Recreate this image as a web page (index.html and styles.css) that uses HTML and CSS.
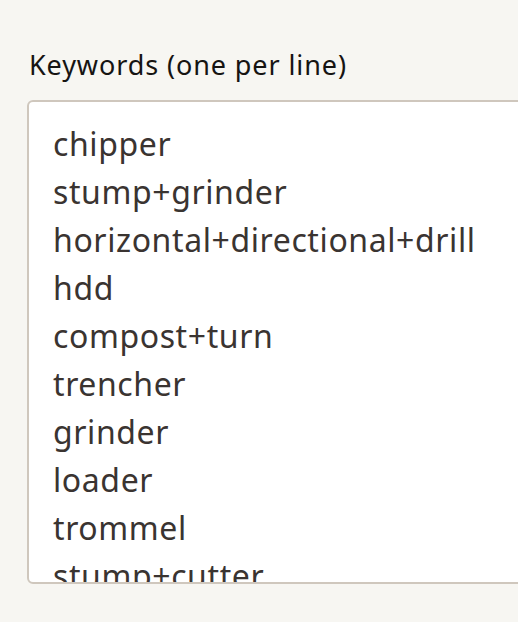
FILE: index.html
```html
<!DOCTYPE html>
<html>
<head>
<meta charset="utf-8">
<link rel="stylesheet" href="styles.css">
</head>
<body>
<div class="field">
<label class="label" for="kw">Keywords (one per line)</label>
<textarea id="kw" class="keywords" spellcheck="false">chipper
stump+grinder
horizontal+directional+drill
hdd
compost+turn
trencher
grinder
loader
trommel
stump+cutter
mulcher
excavator</textarea>
</div>
</body>
</html>
```

FILE: styles.css
```css
html, body {
  margin: 0;
  padding: 0;
  background: #f7f6f2;
  overflow: hidden;
  width: 518px;
  height: 622px;
}
.field {
  padding: 47px 0 0 27px;
  display: flex;
  flex-direction: column;
}
.label {
  font-family: "Noto Sans", sans-serif;
  font-size: 27px;
  letter-spacing: 0.9px;
  color: #161412;
  padding-left: 2px;
  line-height: 36px;
  margin-bottom: 17px;
  font-variant-ligatures: none;
}
.keywords {
  box-sizing: border-box;
  width: 560px;
  height: 484px;
  border: 2px solid #cfc7bd;
  border-radius: 6px;
  background: #ffffff;
  padding: 18px 23px 17px 24px;
  font-family: "Noto Sans", sans-serif;
  font-size: 32px;
  letter-spacing: 0.6px;
  line-height: 48px;
  color: #3a3431;
  resize: none;
  overflow: hidden;
  outline: none;
  margin: 0;
  font-variant-ligatures: none;
}
```
